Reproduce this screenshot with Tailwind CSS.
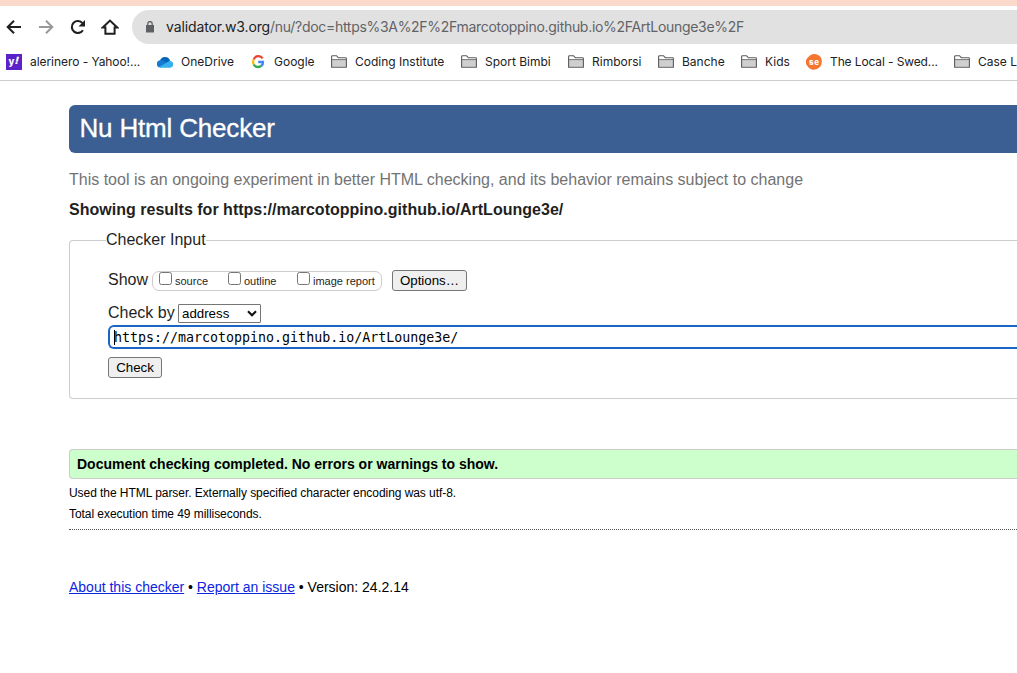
<!DOCTYPE html>
<html lang="en">
<head>
<meta charset="utf-8">
<title>Nu Html Checker</title>
<script src="https://cdn.jsdelivr.net/npm/@tailwindcss/browser@4"></script>
</head>
<body class="w-[1017px] h-[673px] overflow-hidden bg-white font-['Liberation_Sans',Arial,sans-serif] text-[#1f1f1f]">
<svg class="hidden">
  <symbol id="folder" viewBox="0 0 16 16"><path d="M.6 13.4V2.6q0-.9.9-.9h4.300l1.700 2h7q.9 0 .9.9v8.800z" fill="#fff"/><path d="M1 6.500h14v6.300H1z" fill="#cfcfcf"/><path d="M.6 13.200V2.600q0-.9.9-.9h4l1.800 2h7.200q.9 0 .9.9v8.600zM.6 5.800h14.800" fill="none" stroke="#5b5b5b" stroke-width="1.100"/></symbol>
</svg>
<div class="h-[6px] bg-[#fbdacb]"></div>
<div class="flex h-[42px] pt-1">
  <div class="flex w-[132px] h-[34px] items-center shrink-0 pl-[5px]">
    <svg class="w-[18px] h-[18px] mr-[14px]" viewBox="0 0 18 18" fill="none" stroke="#1f1f21" stroke-width="2"><path d="M16 9H3M9 2.700 2.700 9 9 15.300"/></svg>
    <svg class="w-[18px] h-[18px] mr-[14px]" viewBox="0 0 18 18" fill="none" stroke="#98999b" stroke-width="2"><path d="M2 9h13M9 2.700 15.300 9 9 15.300"/></svg>
    <svg class="w-[18px] h-[18px] mr-[14px]" viewBox="0 0 18 18"><path d="M13.900 12.200A6 6 0 1 1 13.500 5.200" fill="none" stroke="#1f1f21" stroke-width="2.100"/><path d="M16 2v6.500H9.500z" fill="#1f1f21"/></svg>
    <svg class="w-[18px] h-[18px]" viewBox="0 0 18 18" fill="none" stroke="#1f1f21" stroke-width="2"><path d="M1.800 9.400h2.600v6.400h9.200V9.400h2.600L9 2.600z"/></svg>
  </div>
  <div class="flex flex-1 h-[34px] rounded-l-full bg-[#e1e1e1] items-center pl-[14px]">
    <svg class="w-[8px] h-[12px] mr-3 shrink-0" viewBox="0 0 8 12"><path d="M0 4h8v7.500H0z" fill="#5f6063"/><path d="M1.800 4.500V2.800a2.200 2.200 0 0 1 4.400 0v1.700" fill="none" stroke="#5f6063" stroke-width="1.300"/></svg>
    <span class="whitespace-nowrap font-[Inter,sans-serif] text-[14px] -mt-px tracking-[-0.300px] text-[#626366]"><span class="text-[#202124] tracking-[-0.120px]">validator.w3.org</span>/nu/?doc=https%3A%2F%2Fmarcotoppino.github.io%2FArtLounge3e%2F</span>
  </div>
</div>
<div class="flex h-[33px] items-center border-b border-[#cbcbcb] pl-[6px] pb-[5px] font-[Inter,sans-serif] text-[12px] text-[#202124] whitespace-nowrap [&>div]:flex [&>div]:items-center [&>div]:gap-2 [&>div]:shrink-0 [&_svg]:w-4 [&_svg]:h-4 [&_svg]:shrink-0">
  <div class="w-[151px]"><svg viewBox="0 0 16 16"><path d="M0 0h16v16H0z" fill="#5b22c9"/><text x="2.600" y="10.500" font-family="Inter" font-weight="800" font-size="9.500" fill="#fff">y</text><text x="8.500" y="10.500" font-family="Inter" font-weight="900" font-size="10" fill="#fff" transform="skewX(-14) translate(2.400 0)">!</text></svg><span class="tracking-[-0.060px]">alerinero - Yahoo!...</span></div>
  <div class="w-[93px]"><svg viewBox="0 0 16 16"><path d="M3.500 13.400h9.500a3 3 0 0 0 2.500-5L9 4 1.500 7.600a3.300 3.300 0 0 0 2 5.800" fill="#28a8ea"/><path d="M3 6.500A5.200 5.200 0 0 1 13 7L8 9.800z" fill="#0364b8"/><path d="M3.500 13.400A3.500 3.500 0 0 1 3.500 6.200q2-.5 3.600.7L12 10z" fill="#1479d0"/><path d="m2 13 10.500-6q3.500.3 3.500 3.300-.3 3.100-3 3.100H4z" fill="#35b1ef"/></svg><span>OneDrive</span></div>
  <div class="w-[81px]"><svg viewBox="0 0 16 16" fill="none" stroke-width="2.300"><path d="M12.600 4.300A5 5 0 0 0 3.700 5.500" stroke="#ea4335"/><path d="M3.700 5.500a5 5 0 0 0 0 5" stroke="#fbbc05"/><path d="M3.700 10.500a5 5 0 0 0 7.700 1.200" stroke="#34a853"/><path d="M11.400 11.800A4.700 4.700 0 0 0 13 8H8.200" stroke="#4285f4"/></svg><span>Google</span></div>
  <div class="w-[130px]"><svg><use href="#folder"/></svg><span>Coding Institute</span></div>
  <div class="w-[107px]"><svg><use href="#folder"/></svg><span>Sport Bimbi</span></div>
  <div class="w-[90px]"><svg><use href="#folder"/></svg><span>Rimborsi</span></div>
  <div class="w-[83px]"><svg><use href="#folder"/></svg><span>Banche</span></div>
  <div class="w-[65px]"><svg><use href="#folder"/></svg><span>Kids</span></div>
  <div class="w-[148px]"><svg viewBox="0 0 16 16"><path d="M4 1.500Q8-1 12 1t3.800 6.500-3 6.500-6 1.700T1 11.500 .6 5 4 1.500" fill="#f47631"/><text x="3" y="10.500" font-family="Inter" font-weight="800" font-size="8" textLength="10" fill="#fff">se</text></svg><span class="tracking-[-0.120px]">The Local - Swed...</span></div>
  <div class="w-[90px]"><svg><use href="#folder"/></svg><span>Case L</span></div>
</div>
<main class="ml-[69px] pt-6">
  <h1 class="h-[48px] rounded-l-[6px] bg-[#3b5f92] pl-[10.500px] text-[26px] tracking-[-0.180px] leading-[47px] text-white whitespace-nowrap [-webkit-text-stroke:0.300px_white]">Nu Html Checker</h1>
  <p class="mt-[16px] h-[22px] leading-[22px] text-[16px] text-[#737373] whitespace-nowrap">This tool is an ongoing experiment in better HTML checking, and its behavior remains subject to change</p>
  <h2 class="mt-[8px] h-[22px] leading-[22px] text-[16px] tracking-[0.015px] font-bold whitespace-nowrap">Showing results for https://marcotoppino.github.io/ArtLounge3e/</h2>
  <form class="mt-[19px] h-[159px] border border-r-0 border-[#ccc] rounded-l-[4px] pl-[38px]">
    <div class="-mt-[12px] -ml-[2px] h-[22px] leading-[22px] text-[16px]"><span class="bg-white">Checker Input</span></div>
    <div class="mt-[19px] h-[22px] flex items-start">
      <span class="text-[16px] w-[44px] leading-[20px]">Show</span>
      <div class="mt-px flex h-[20px] w-[230px] border border-[#ccc] rounded-[7px] pl-[6px] text-[11px] leading-[18px]">
        <span class="flex w-[69px] gap-[3px]"><i class="w-[13px] h-[13px] border border-[#767676] rounded-[2.500px]"></i>source</span>
        <span class="flex w-[69px] gap-[3px]"><i class="w-[13px] h-[13px] border border-[#767676] rounded-[2.500px]"></i>outline</span>
        <span class="flex gap-[3px] whitespace-nowrap"><i class="w-[13px] h-[13px] border border-[#767676] rounded-[2.500px]"></i>image report</span>
      </div>
      <button type="button" class="ml-[10px] w-[75px] h-[21px] border border-[#767676] rounded-[3px] bg-[#efefef] text-black text-[13.300px] leading-[19px]">Options…</button>
    </div>
    <div class="mt-[12px] h-[19px] flex items-start">
      <span class="text-[16px] w-[70px] leading-[20px] -mt-[1px] whitespace-nowrap">Check by</span>
      <div class="flex items-center justify-between w-[83px] h-[19px] border border-[#767676] rounded-[1px] pl-[3px] pr-[3px] text-[13.300px] leading-[17px] text-black">address<svg class="w-[10px] h-[7px]" viewBox="0 0 10 7"><path d="m1 1.200 4 4 4-4" fill="none" stroke="#111" stroke-width="2.100"/></svg></div>
    </div>
    <div class="mt-[2px] h-[24px] border-2 border-r-0 border-[#1a66c6] rounded-l-[6px] flex items-center pl-[4px] text-black font-['DejaVu_Sans_Mono',monospace] text-[13.300px]"><i class="w-px h-[15px] bg-black -mr-px"></i><span class="mt-px">https://marcotoppino.github.io/ArtLounge3e/</span></div>
    <button type="button" class="mt-[8px] block w-[54px] h-[21px] border border-[#767676] rounded-[3px] bg-[#efefef] text-black text-[13.300px] leading-[19px]">Check</button>
  </form>
  <p class="mt-[50px] h-[30px] border border-r-0 border-[#ccc] rounded-l-[4px] bg-[#ccffcc] pl-[7px] text-[14px] leading-[29px] font-bold text-black">Document checking completed. No errors or warnings to show.</p>
  <p class="mt-[4px] h-[21px] text-[12px] tracking-[-0.055px] leading-[21px] text-black">Used the HTML parser. Externally specified character encoding was utf-8.</p>
  <p class="h-[26px] text-[12px] tracking-[-0.055px] leading-[21px] text-black border-b border-dotted border-[#555]">Total execution time 49 milliseconds.</p>
  <p class="mt-[47px] text-[14px] leading-[21px] text-black"><a class="underline text-[#0b24e0] underline-offset-1">About this checker</a> • <a class="underline text-[#0b24e0] underline-offset-1">Report an issue</a> • Version: 24.2.14</p>
</main>
</body>
</html>
